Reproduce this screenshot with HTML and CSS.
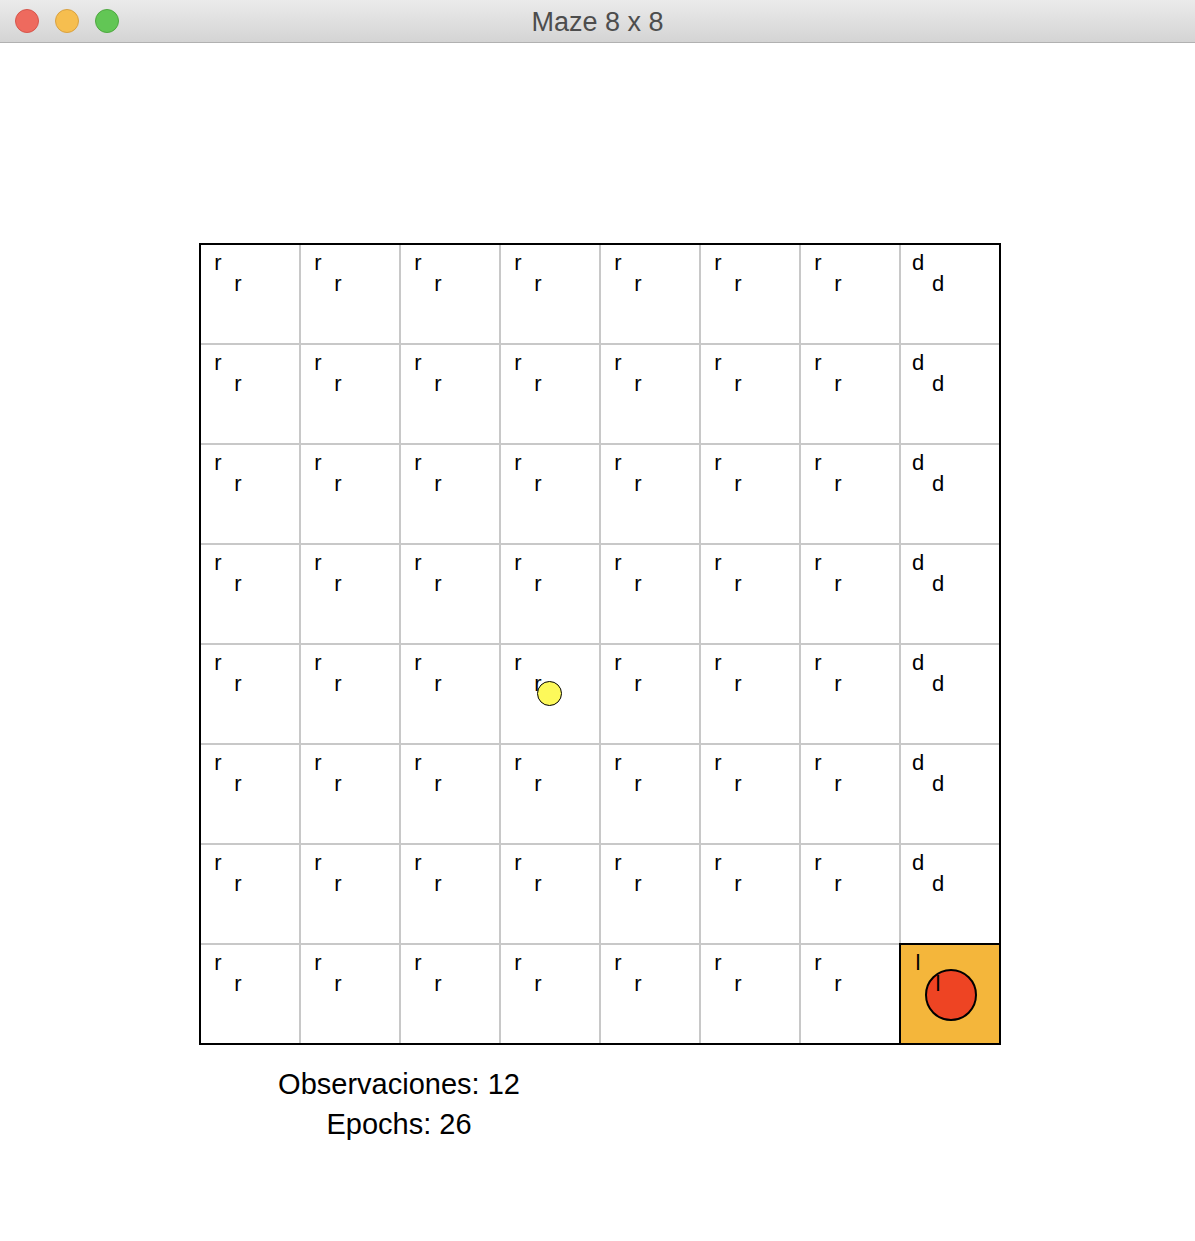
FILE: index.html
```html
<!DOCTYPE html>
<html>
<head>
<meta charset="utf-8">
<title>Maze 8 x 8</title>
<link rel="stylesheet" href="styles.css">
</head>
<body>
<div class="window">
  <div class="titlebar">
    <div class="lights">
      <span class="light red"></span>
      <span class="light yellow"></span>
      <span class="light green"></span>
    </div>
    <div class="title">Maze 8 x 8</div>
  </div>
  <div class="content">
    <div class="board">
      <div class="cell"><span class="a">r</span><span class="b">r</span></div>
      <div class="cell"><span class="a">r</span><span class="b">r</span></div>
      <div class="cell"><span class="a">r</span><span class="b">r</span></div>
      <div class="cell"><span class="a">r</span><span class="b">r</span></div>
      <div class="cell"><span class="a">r</span><span class="b">r</span></div>
      <div class="cell"><span class="a">r</span><span class="b">r</span></div>
      <div class="cell"><span class="a">r</span><span class="b">r</span></div>
      <div class="cell"><span class="a">d</span><span class="b">d</span></div>

      <div class="cell"><span class="a">r</span><span class="b">r</span></div>
      <div class="cell"><span class="a">r</span><span class="b">r</span></div>
      <div class="cell"><span class="a">r</span><span class="b">r</span></div>
      <div class="cell"><span class="a">r</span><span class="b">r</span></div>
      <div class="cell"><span class="a">r</span><span class="b">r</span></div>
      <div class="cell"><span class="a">r</span><span class="b">r</span></div>
      <div class="cell"><span class="a">r</span><span class="b">r</span></div>
      <div class="cell"><span class="a">d</span><span class="b">d</span></div>

      <div class="cell"><span class="a">r</span><span class="b">r</span></div>
      <div class="cell"><span class="a">r</span><span class="b">r</span></div>
      <div class="cell"><span class="a">r</span><span class="b">r</span></div>
      <div class="cell"><span class="a">r</span><span class="b">r</span></div>
      <div class="cell"><span class="a">r</span><span class="b">r</span></div>
      <div class="cell"><span class="a">r</span><span class="b">r</span></div>
      <div class="cell"><span class="a">r</span><span class="b">r</span></div>
      <div class="cell"><span class="a">d</span><span class="b">d</span></div>

      <div class="cell"><span class="a">r</span><span class="b">r</span></div>
      <div class="cell"><span class="a">r</span><span class="b">r</span></div>
      <div class="cell"><span class="a">r</span><span class="b">r</span></div>
      <div class="cell"><span class="a">r</span><span class="b">r</span></div>
      <div class="cell"><span class="a">r</span><span class="b">r</span></div>
      <div class="cell"><span class="a">r</span><span class="b">r</span></div>
      <div class="cell"><span class="a">r</span><span class="b">r</span></div>
      <div class="cell"><span class="a">d</span><span class="b">d</span></div>

      <div class="cell"><span class="a">r</span><span class="b">r</span></div>
      <div class="cell"><span class="a">r</span><span class="b">r</span></div>
      <div class="cell"><span class="a">r</span><span class="b">r</span></div>
      <div class="cell"><span class="a">r</span><span class="b">r</span><span class="agent"></span></div>
      <div class="cell"><span class="a">r</span><span class="b">r</span></div>
      <div class="cell"><span class="a">r</span><span class="b">r</span></div>
      <div class="cell"><span class="a">r</span><span class="b">r</span></div>
      <div class="cell"><span class="a">d</span><span class="b">d</span></div>

      <div class="cell"><span class="a">r</span><span class="b">r</span></div>
      <div class="cell"><span class="a">r</span><span class="b">r</span></div>
      <div class="cell"><span class="a">r</span><span class="b">r</span></div>
      <div class="cell"><span class="a">r</span><span class="b">r</span></div>
      <div class="cell"><span class="a">r</span><span class="b">r</span></div>
      <div class="cell"><span class="a">r</span><span class="b">r</span></div>
      <div class="cell"><span class="a">r</span><span class="b">r</span></div>
      <div class="cell"><span class="a">d</span><span class="b">d</span></div>

      <div class="cell"><span class="a">r</span><span class="b">r</span></div>
      <div class="cell"><span class="a">r</span><span class="b">r</span></div>
      <div class="cell"><span class="a">r</span><span class="b">r</span></div>
      <div class="cell"><span class="a">r</span><span class="b">r</span></div>
      <div class="cell"><span class="a">r</span><span class="b">r</span></div>
      <div class="cell"><span class="a">r</span><span class="b">r</span></div>
      <div class="cell"><span class="a">r</span><span class="b">r</span></div>
      <div class="cell"><span class="a">d</span><span class="b">d</span></div>

      <div class="cell"><span class="a">r</span><span class="b">r</span></div>
      <div class="cell"><span class="a">r</span><span class="b">r</span></div>
      <div class="cell"><span class="a">r</span><span class="b">r</span></div>
      <div class="cell"><span class="a">r</span><span class="b">r</span></div>
      <div class="cell"><span class="a">r</span><span class="b">r</span></div>
      <div class="cell"><span class="a">r</span><span class="b">r</span></div>
      <div class="cell"><span class="a">r</span><span class="b">r</span></div>
      <div class="cell goal"><span class="target"></span><span class="a">l</span><span class="b">l</span></div>
    </div>
    <div class="stats">
      <div class="stat">Observaciones: 12</div>
      <div class="stat">Epochs: 26</div>
    </div>
  </div>
</div>
</body>
</html>
```

FILE: styles.css
```css
html, body {
  margin: 0;
  padding: 0;
  background: #ffffff;
}

.window {
  width: 1195px;
  min-height: 1241px;
  background: #ffffff;
  font-family: "Liberation Sans", Arial, sans-serif;
}

.titlebar {
  position: relative;
  height: 42px;
  background: linear-gradient(to bottom, #ebebeb, #d4d4d4);
  border-bottom: 1px solid #b1b1b1;
}

.lights {
  position: absolute;
  left: 15px;
  top: 9px;
  display: flex;
  gap: 16px;
}

.light {
  width: 22px;
  height: 22px;
  border-radius: 50%;
  box-sizing: content-box;
  display: block;
}

.light.red {
  background: #ee6a5e;
  border: 1px solid #d6554b;
}

.light.yellow {
  background: #f6be4f;
  border: 1px solid #d9a140;
}

.light.green {
  background: #62c655;
  border: 1px solid #4ea840;
}

.title {
  text-align: center;
  font-size: 27px;
  line-height: 39px;
  padding-top: 3px;
  color: #4d4d4d;
}

.content {
  padding: 200px 0 0 199px;
}

.board {
  display: grid;
  grid-template-columns: repeat(8, 98px);
  grid-auto-rows: 98px;
  gap: 2px;
  background: #c8c8c8;
  border: 2px solid #000000;
  width: 798px;
}

.cell {
  position: relative;
  background: #ffffff;
  padding: 7px 0 0 0;
  box-sizing: border-box;
  font-size: 22px;
  line-height: 21px;
  color: #000000;
}

.cell .a,
.cell .b {
  display: block;
  position: relative;
  width: 34px;
  text-align: center;
}

.cell .b {
  margin-left: 20px;
}

.agent {
  position: absolute;
  left: 36px;
  top: 36px;
  width: 23px;
  height: 23px;
  border: 1.5px solid #000000;
  border-radius: 50%;
  background: #fdf95a;
}

.cell.goal {
  background: #f4b63b;
  box-shadow: 0 0 0 2px #000000;
  z-index: 1;
}

.target {
  position: absolute;
  left: 24px;
  top: 24px;
  width: 48px;
  height: 48px;
  border: 2px solid #000000;
  border-radius: 50%;
  background: #ee4423;
}

.stats {
  width: 400px;
  margin-top: 19px;
  text-align: center;
  font-size: 29px;
  line-height: 40px;
  color: #000000;
}
```
